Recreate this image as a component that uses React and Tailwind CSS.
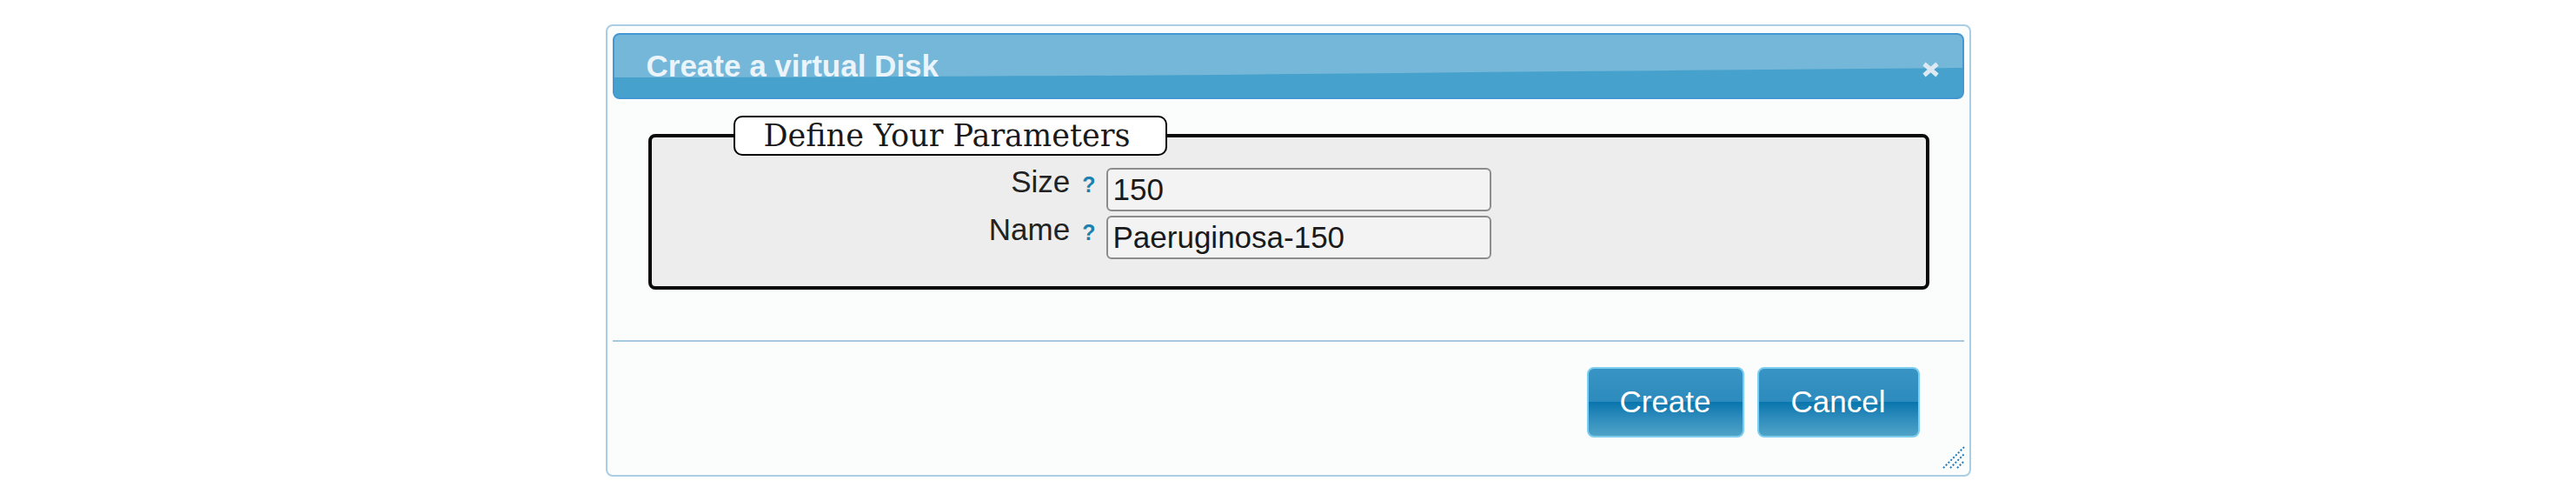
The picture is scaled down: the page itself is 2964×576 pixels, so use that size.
import React from "react";

export default function App() {
  return (
    <div className="w-full h-[576px] bg-white flex justify-center pt-[28px]">
      <div className="relative w-[1571px] h-[520px] border-2 border-[#aacde4] rounded-[8px] bg-[#fbfdfd] px-[6px] pt-[8px] flex flex-col">
        {/* Title bar */}
        <div className="relative h-[76px] rounded-[8px] border-2 border-[#4397d3] bg-[#46a1cc] overflow-hidden flex items-center justify-between pl-[37px] pr-[26px]">
          <svg
            className="absolute inset-0 w-full h-full"
            viewBox="0 0 1551 72"
            preserveAspectRatio="none"
          >
            <path
              d="M0 0 H1551 V38 C1300 40 1000 43 700 46 C400 48 200 49 0 49 Z"
              fill="#74b7d8"
            />
          </svg>
          <span className="relative font-['Liberation_Sans',Arial,sans-serif] font-bold text-[35px] text-[#eaf4fa]">
            Create a virtual Disk
          </span>
          <svg className="relative mt-[8px]" width="21" height="18" viewBox="0 0 21 18">
            <path d="M3 2.5 L18 15.5 M18 2.5 L3 15.5" stroke="#dde9f2" strokeWidth="5" strokeLinecap="butt" />
          </svg>
        </div>

        {/* Content */}
        <div className="pt-[19px] pl-[41px]">
          <fieldset className="w-[1474px] border-4 border-[#0a0a0a] rounded-[8px] bg-[#ededed] pt-[14px] pb-[31px]">
            <legend className="ml-[94px] w-[499px] h-[46px] border-2 border-black rounded-[10px] bg-white text-left pl-[33px] font-['DejaVu_Serif',serif] text-[35px] leading-[42px] text-[#1a1a1a]">
              Define Your Parameters
            </legend>
            <div className="grid grid-cols-[523px_443px] gap-y-[5px] font-['Liberation_Sans',Arial,sans-serif]">
              <div className="text-right pr-[12px] text-[35px] leading-[32px] text-[#222]">
                Size
                <span className="ml-[14px] font-bold text-[25px] text-[#1f7fae]">?</span>
              </div>
              <div className="h-[50px] border-2 border-[#8c8c8c] rounded-[6px] bg-[#f3f3f3] px-[6px] flex items-center text-[35px] text-[#1a1a1a]">
                150
              </div>
              <div className="text-right pr-[12px] text-[35px] leading-[32px] text-[#222]">
                Name
                <span className="ml-[14px] font-bold text-[25px] text-[#1f7fae]">?</span>
              </div>
              <div className="h-[50px] border-2 border-[#8c8c8c] rounded-[6px] bg-[#f3f3f3] px-[6px] flex items-center text-[35px] text-[#1a1a1a]">
                Paeruginosa-150
              </div>
            </div>
          </fieldset>
        </div>

        {/* Button pane */}
        <div className="mt-[58px] border-t-2 border-[#a6c9e2] pt-[29px] pr-[51px] flex justify-end gap-[15px]">
          <button className="w-[181px] h-[81px] border-2 border-[#7dcdef] rounded-[8px] bg-[linear-gradient(to_bottom,#3894c4_0%,#2d8bbd_49%,#0775ac_49%,#2a89bb_70%,#4fa3c7_100%)] text-white text-[35px] font-['Liberation_Sans',Arial,sans-serif]">
            Create
          </button>
          <button className="w-[187px] h-[81px] border-2 border-[#7dcdef] rounded-[8px] bg-[linear-gradient(to_bottom,#3894c4_0%,#2d8bbd_49%,#0775ac_49%,#2a89bb_70%,#4fa3c7_100%)] text-white text-[35px] font-['Liberation_Sans',Arial,sans-serif]">
            Cancel
          </button>
        </div>

        {/* Resize handle */}
        <svg className="absolute bottom-[7px] right-[5px]" width="26" height="26" viewBox="0 0 26 26">
          <g stroke="#1f78b8" strokeWidth="2" strokeDasharray="2 2">
            <path d="M1 25 L25 1" />
            <path d="M9 25 L25 9" />
            <path d="M17 25 L25 17" />
          </g>
        </svg>
      </div>
    </div>
  );
}
